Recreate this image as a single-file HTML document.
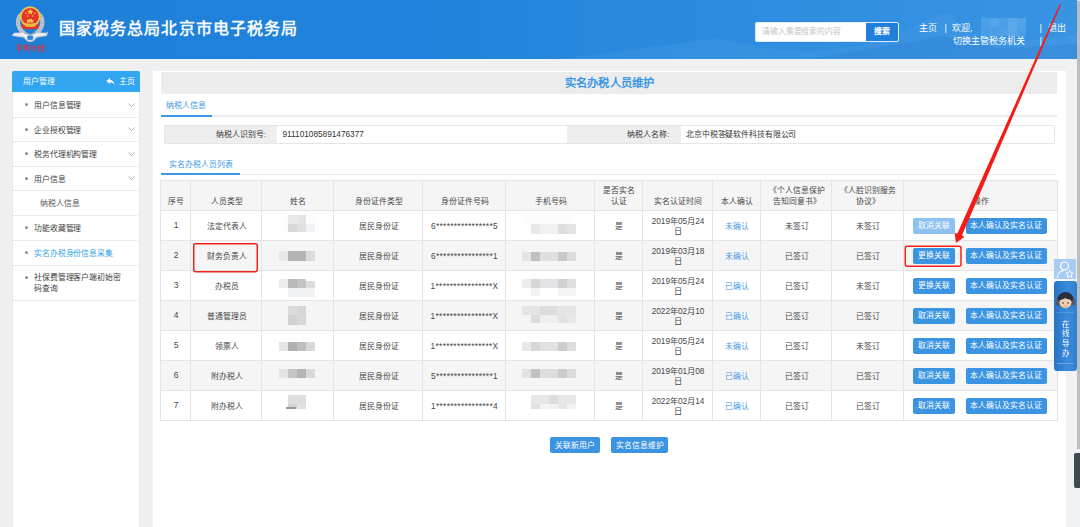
<!DOCTYPE html>
<html lang="zh-CN">
<head>
<meta charset="utf-8">
<title>实名办税人员维护</title>
<style>
*{box-sizing:border-box;margin:0;padding:0}
html,body{width:1080px;height:527px;overflow:hidden}
body{font-family:"Liberation Sans",sans-serif;background:#eff0f2;color:#333;position:relative;font-size:8px}
.abs{position:absolute}
#hdr{left:0;top:0;width:1080px;height:59px;background:linear-gradient(90deg,#1e7fd9 0%,#2083db 40%,#2e8de0 70%,#3893e3 100%);overflow:hidden}
#hdr h1{position:absolute;left:58.700px;top:16.800px;font-size:16px;line-height:24px;font-weight:bold;color:#f5f9fd;letter-spacing:1.120px;white-space:nowrap}
#search{left:755px;top:22px;width:143.500px;height:20px;background:#fff;border-radius:2px;border:1px solid #dcebfa;overflow:hidden}
#search span{position:absolute;left:6px;top:0;line-height:18px;font-size:7.875px;color:#c4c4c4;white-space:nowrap;letter-spacing:-0.120px}
#search b{position:absolute;right:0;top:0;width:32px;height:18px;background:#1f7fdb;color:#fff;font-size:7.875px;line-height:18px;text-align:center;font-weight:bold}
.ht{color:#fff;font-size:9px;line-height:12px;white-space:nowrap}
#side{left:12px;top:71px;width:128px;height:456px;background:#fff;border-left:1px solid #e6e8ec;border-right:1px solid #e6e8ec}
#side .sh{position:absolute;left:-1px;top:0;width:128px;height:21px;background:#32a6f1;border-radius:2px 2px 0 0;color:#fff;font-size:7.875px;line-height:21px}
.mi{position:absolute;left:0;width:126px;font-size:7.875px;line-height:12px;color:#404040;height:25px;background:repeating-linear-gradient(90deg,#dadada 0,#dadada 1px,transparent 1px,transparent 2px) 0 0/100% 1px no-repeat}
.mi i{position:absolute;left:12px;top:11px;width:3px;height:3px;border-radius:50%;background:#8c8c8c}
.mi span{position:absolute;left:21px;top:8px;white-space:nowrap;letter-spacing:-0.120px}
.mi svg{position:absolute;left:115px;top:10.500px}
#main{left:153px;top:71px;width:913px;height:456px;background:#fff}
#ttl{left:161px;top:71.500px;width:896px;height:22px;background:#ececec;color:#3d97e6;font-weight:bold;font-size:11.250px;line-height:22px;text-align:center;letter-spacing:0.250px;padding-left:1px}
.tab{color:#3d97e6;font-size:7.875px;line-height:10px;white-space:nowrap}
.ln{background:#ededed}
.ul{background:#3d97e6;height:2px}
.lab{background:#eeeeee;text-align:right;font-size:7.875px;line-height:17px;height:17px;color:#333;white-space:nowrap}
table{border-collapse:collapse;table-layout:fixed}
#grid{left:160px;top:180px;width:897px}
#grid td,#grid th{border:1px solid #e4e4e4;text-align:center;font-weight:normal;font-size:7.875px;line-height:10.500px;color:#464646;height:30px;padding:4px 0 0 1px;overflow:hidden;vertical-align:middle;white-space:nowrap}
#grid th{background:#f5f5f5;vertical-align:bottom;padding:0 0 2.750px 1px;line-height:11.250px}
#grid tr.alt td{background:#f5f5f5}
#grid td.lk{color:#4a9be6}
#grid td.n{font-size:8.500px;padding-top:0;padding-bottom:1px}
#grid td.id{font-size:8.250px;letter-spacing:0.350px;padding-top:3px}
#grid td.dt{font-size:8.250px;padding-top:3px}
#grid td.op{text-align:left;padding:0.500px 0 0 9px}
.btn{display:inline-block;background:#3a94e2;color:#fff;font-size:7.875px;line-height:16.500px;height:15.500px;border-radius:2px;text-align:center;white-space:nowrap;vertical-align:middle}
.btn.dis{background:#8cc1f0}
.b1{width:41.500px;margin-right:11.500px}
.b2{width:80.500px}
.mz{position:absolute}
</style>
</head>
<body>
<!-- header -->
<div id="hdr" class="abs">
  <svg class="abs" style="left:560px;top:0" width="520" height="59" viewBox="0 0 520 59">
    <path d="M0 59 L40 54 L90 47 L130 42 L158 38 L175 42 L205 48 L250 52 L300 46 L340 34 L365 20 L375 14 L392 14 L398 24 L420 36 L460 42 L520 34 L520 59 Z" fill="#ffffff" opacity="0.045"/>
    <path d="M250 59 L300 50 L350 42 L380 36 L400 40 L440 48 L520 44 L520 59 Z" fill="#0b4fa8" opacity="0.110"/>
  </svg>
  <!-- emblem -->
  <svg class="abs" style="left:0;top:0" width="60" height="59" viewBox="0 0 60 59">
    <g filter="url(#bl)">
    <!-- wreath -->
    <path d="M22.500 13.500 C16.500 17.500 15.800 27 24.500 33.500" fill="none" stroke="#c5cad1" stroke-width="4.200"/>
    <path d="M37.900 13.500 C43.900 17.500 44.600 27 35.900 33.500" fill="none" stroke="#c5cad1" stroke-width="4.200"/>
    <path d="M22.500 13.500 C16.500 17.500 15.800 27 24.500 33.500" fill="none" stroke="#7f8791" stroke-width="3.400" stroke-dasharray="0.700 1.500" opacity=".55"/>
    <path d="M37.900 13.500 C43.900 17.500 44.600 27 35.900 33.500" fill="none" stroke="#7f8791" stroke-width="3.400" stroke-dasharray="0.700 1.500" opacity=".55"/>
    <!-- shield -->
    <path d="M21.800 17 L38.600 17 L38.600 28 Q34 30 30.200 29 Q26.400 30 21.800 28 Z" fill="#e2342c"/>
    <circle cx="30.200" cy="16.600" r="10.400" fill="#e9c348"/>
    <circle cx="30.200" cy="16.600" r="8.600" fill="#e5352c"/>
    <path d="M30.200 8.800l.9 2 2.200.2-1.700 1.400.6 2.100-2-1.200-2 1.200.6-2.100-1.700-1.400 2.200-.2z" fill="#f6d54e"/>
    <circle cx="25.800" cy="13.300" r=".8" fill="#f6d54e"/><circle cx="34.600" cy="13.300" r=".8" fill="#f6d54e"/>
    <circle cx="27.600" cy="16" r=".7" fill="#f6d54e"/><circle cx="32.800" cy="16" r=".7" fill="#f6d54e"/>
    <path d="M27 22.400 L27 20 L28.500 20 L28.500 19 L31.900 19 L31.900 20 L33.400 20 L33.400 22.400 Z" fill="#f1c547"/>
    <path d="M22.500 22.600 Q30.200 24.800 37.900 22.600 L37.600 24 Q30.200 26.200 22.800 24 Z" fill="#ecc349"/>
    <rect x="25" y="25.800" width="10.400" height="1" fill="#e9b83d" opacity=".8"/>
    <!-- ribbon -->
    <path d="M11.700 35.500 L14 32.800 L24 32.200 L30.200 35 L36.400 32.200 L46.400 32.800 L48.200 31.200 L46.800 36 L37 37.600 L33.500 41 Q30.200 43.200 26.900 41 L23.400 37.600 L13.600 36.200 Z" fill="#cfd4da"/>
    <path d="M14 33.800 L24 33.200 L30.200 36 L36.400 33.200 L46 33.800 L45.500 35 L36.800 36.300 L30.200 39.800 L23.600 36.300 L14.500 35.200Z" fill="#eef0f3"/>
    <path d="M27 36.400 L30.200 34.600 L33.400 36.400 L32.600 39.400 Q30.200 40.400 27.800 39.400 Z" fill="#2b86dc"/>
    <path d="M23 31 L30.200 34.200 L37.400 31 L36 33.400 L30.200 36 L24.400 33.400Z" fill="#aeb4bc"/>
    <!-- calligraphy -->
    <g fill="none" stroke="#e3303a" stroke-width="0.850" stroke-linecap="round">
      <path d="M17.600 46 L22 45.600 L21.600 48.600 L17.800 48.800 Z M19.700 43.400 L19.400 52.600"/>
      <path d="M24.400 45.200 L24.200 51 M24.400 45.200 L28.600 45 L28.400 51.200 M25.400 47 L27.600 46.800 M25.400 48.800 L27.600 48.600 M26.500 46 L26.400 50"/>
      <path d="M31.200 45 L32.200 46.400 M31 48 L32.400 47.600 L32 51 M34 45 L34.600 46.200 M36 44.800 L35.400 46.200 M33.800 47.400 L36.400 47.200 M35 47.400 L34.800 51.200 L36.800 50.400"/>
      <path d="M38 47.200 L40 45.400 M38.600 48.200 L40.400 47 M39.200 47.400 L39 51.400 M41.400 45.600 L44 45.400 M41 47.400 L44.400 47.200 M42.600 44.600 L42.600 48.400 M41.400 49.200 L44 49 L43.800 51.400 L41.400 51.400 Z"/>
    </g>
    </g>
    <defs><filter id="bl" x="-5%" y="-5%" width="110%" height="110%"><feGaussianBlur stdDeviation="0.350"/></filter></defs>
  </svg>
  <h1>国家税务总局北京市电子税务局</h1>
  <div id="search" class="abs"><span>请输入需要搜索的内容</span><b>搜索</b></div>
  <div class="abs ht" style="left:919px;top:21.500px">主页</div>
  <div class="abs ht" style="left:944.500px;top:21.500px">|</div>
  <div class="abs ht" style="left:952px;top:21.500px">欢迎,</div>
  <div class="abs" style="left:981px;top:18px;width:45px;height:17.500px;background:#4b9fe7;filter:blur(0.400px)">
    <div class="abs" style="left:9px;top:0;width:9px;height:9px;background:#55a5e9"></div>
    <div class="abs" style="left:27px;top:0;width:9px;height:17.500px;background:#5aa8ea"></div>
    <div class="abs" style="left:36px;top:0;width:9px;height:9px;background:#52a3e8"></div>
    <div class="abs" style="left:0;top:9px;width:9px;height:8.500px;background:#489de6"></div>
    <div class="abs" style="left:18px;top:9px;width:9px;height:8.500px;background:#4fa1e8"></div>
  </div>
  <div class="abs ht" style="left:1039.500px;top:21.500px">|</div>
  <div class="abs ht" style="left:1047.500px;top:21.500px">退出</div>
  <div class="abs ht" style="left:952.500px;top:35px">切换主管税务机关</div>
  <div class="abs ht" style="left:1039.500px;top:35px">|</div>
</div>

<!-- sidebar -->
<div id="side" class="abs">
  <div class="sh"><span style="position:absolute;left:11px">用户管理</span>
    <svg style="position:absolute;left:94px;top:7px" width="9" height="7.500" viewBox="0 0 9 8"><path d="M4 0 L0 3.200 L4 6.400 L4 4.400 C6.200 4.400 7.600 5.200 8.600 7.200 C8.400 4 6.800 2.200 4 2 Z" fill="#fff"/></svg>
    <span style="position:absolute;left:106.500px">主页</span></div>
  <div class="mi" style="top:21px;background:none"><i style="top:11px"></i><span style="top:8px">用户信息管理</span><svg width="7" height="4.500" viewBox="0 0 8 5"><path d="M.5 .5 L4 4 L7.500 .5" fill="none" stroke="#999" stroke-width="0.900"/></svg></div>
  <div class="mi" style="top:45.600px"><i></i><span>企业授权管理</span><svg width="7" height="4.500" viewBox="0 0 8 5"><path d="M.5 .5 L4 4 L7.500 .5" fill="none" stroke="#999" stroke-width="0.900"/></svg></div>
  <div class="mi" style="top:70.200px"><i></i><span>税务代理机构管理</span><svg width="7" height="4.500" viewBox="0 0 8 5"><path d="M.5 .5 L4 4 L7.500 .5" fill="none" stroke="#999" stroke-width="0.900"/></svg></div>
  <div class="mi" style="top:94.800px"><i></i><span>用户信息</span><svg width="7" height="4.500" viewBox="0 0 8 5"><path d="M.5 .5 L4 4 L7.500 .5" fill="none" stroke="#999" stroke-width="0.900"/></svg></div>
  <div class="mi" style="top:119.400px"><span style="left:27px;color:#555;top:8px">纳税人信息</span></div>
  <div class="mi" style="top:144px"><i style="top:11px"></i><span style="top:8px">功能收藏管理</span></div>
  <div class="mi" style="top:169px"><i style="top:11px"></i><span style="color:#31a4e6;top:8px">实名办税身份信息采集</span></div>
  <div class="mi" style="top:194px;height:36px"><i style="top:11px"></i><span style="white-space:normal;width:90px;line-height:10.700px;top:8px">社保费管理客户端初始密码查询</span></div>
  <div class="mi" style="top:229px;height:2px"></div>
</div>

<!-- main -->
<div id="main" class="abs"></div>
<div class="abs" style="left:1066px;top:59px;width:14px;height:468px;background:#f0f1f3"></div>
<div class="abs" style="left:1076.500px;top:0;width:3.500px;height:59px;background:#dfe5ec;z-index:5"></div>
<div class="abs" style="left:1077px;top:1px;width:3px;height:448px;background:#bdbdbd;z-index:6"></div>
<div class="abs" style="left:1074px;top:453px;width:6px;height:35px;background:#3e4954;border-radius:2px 0 0 2px"></div>
<div id="ttl" class="abs">实名办税人员维护</div>

<div class="abs tab" style="left:166px;top:101px;font-size:8px">纳税人信息</div>
<div class="abs ln" style="left:161px;top:115px;width:896px;height:1.500px"></div>
<div class="abs ul" style="left:161px;top:114.500px;width:50.500px"></div>

<!-- info row -->
<div class="abs" style="left:164px;top:125px;width:891px;height:19px;border:1px solid #e6e6e6;background:#fff"></div>
<div class="abs lab" style="left:165px;top:126px;width:112px;padding-right:11px">纳税人识别号:</div>
<div class="abs" style="left:282.500px;top:126px;font-size:8.250px;line-height:17px;color:#333">911101085891476377</div>
<div class="abs lab" style="left:567px;top:126px;width:113.500px;padding-right:11px">纳税人名称:</div>
<div class="abs" style="left:686px;top:126px;font-size:7.875px;line-height:17px;color:#333;white-space:nowrap;letter-spacing:-0.120px">北京中税答疑软件科技有限公司</div>

<div class="abs tab" style="left:168.500px;top:159.500px">实名办税人员列表</div>
<div class="abs ln" style="left:161px;top:173.500px;width:896px;height:1.500px"></div>
<div class="abs ul" style="left:161px;top:173px;width:78.500px"></div>

<table id="grid" class="abs">
<colgroup><col style="width:30px"><col style="width:71px"><col style="width:72px"><col style="width:89px"><col style="width:83px"><col style="width:89px"><col style="width:48px"><col style="width:70px"><col style="width:48px"><col style="width:71px"><col style="width:72px"><col style="width:154px"></colgroup>
<tr><th>序号</th><th>人员类型</th><th>姓名</th><th>身份证件类型</th><th>身份证件号码</th><th>手机号码</th><th>是否实名<br>认证</th><th>实名认证时间</th><th>本人确认</th><th>《个人信息保护<br>告知同意书》</th><th>《人脸识别服务<br>协议》</th><th>操作</th></tr>
<tr><td class="n">1</td><td>法定代表人</td><td></td><td>居民身份证</td><td class="id">6****************5</td><td></td><td>是</td><td class="dt">2019年05月24<br>日</td><td class="lk">未确认</td><td>未签订</td><td>未签订</td><td class="op"><span class="btn b1 dis">取消关联</span><span class="btn b2">本人确认及实名认证</span></td></tr>
<tr class="alt"><td class="n">2</td><td>财务负责人</td><td></td><td>居民身份证</td><td class="id">6****************1</td><td></td><td>是</td><td class="dt">2019年03月18<br>日</td><td class="lk">未确认</td><td>已签订</td><td>已签订</td><td class="op"><span class="btn b1">更换关联</span><span class="btn b2">本人确认及实名认证</span></td></tr>
<tr><td class="n">3</td><td>办税员</td><td></td><td>居民身份证</td><td class="id">1****************X</td><td></td><td>是</td><td class="dt">2019年05月24<br>日</td><td class="lk">已确认</td><td>已签订</td><td>未签订</td><td class="op"><span class="btn b1">更换关联</span><span class="btn b2">本人确认及实名认证</span></td></tr>
<tr class="alt"><td class="n">4</td><td>普通管理员</td><td></td><td>居民身份证</td><td class="id">1****************X</td><td></td><td>是</td><td class="dt">2022年02月10<br>日</td><td class="lk">已确认</td><td>已签订</td><td>已签订</td><td class="op"><span class="btn b1">取消关联</span><span class="btn b2">本人确认及实名认证</span></td></tr>
<tr><td class="n">5</td><td>领票人</td><td></td><td>居民身份证</td><td class="id">1****************X</td><td></td><td>是</td><td class="dt">2019年05月24<br>日</td><td class="lk">未确认</td><td>已签订</td><td>未签订</td><td class="op"><span class="btn b1">取消关联</span><span class="btn b2">本人确认及实名认证</span></td></tr>
<tr class="alt"><td class="n">6</td><td>附办税人</td><td></td><td>居民身份证</td><td class="id">5****************1</td><td></td><td>是</td><td class="dt">2019年01月08<br>日</td><td class="lk">已确认</td><td>已签订</td><td>已签订</td><td class="op"><span class="btn b1">取消关联</span><span class="btn b2">本人确认及实名认证</span></td></tr>
<tr><td class="n">7</td><td>附办税人</td><td></td><td>居民身份证</td><td class="id">1****************4</td><td></td><td>是</td><td class="dt">2022年02月14<br>日</td><td class="lk">已确认</td><td>已签订</td><td>已签订</td><td class="op"><span class="btn b1">取消关联</span><span class="btn b2">本人确认及实名认证</span></td></tr>
</table>

<div class="abs" style="left:0;top:0;filter:blur(0.5px)">
<div class="mz" style="left:284px;top:213px;width:34px;height:21px;background:#fdfdfd"></div>
<div class="mz" style="left:288px;top:215px;width:9px;height:8.5px;background:#e9e9e9"></div>
<div class="mz" style="left:297px;top:215px;width:9px;height:8.5px;background:#e4e4e4"></div>
<div class="mz" style="left:288px;top:223.5px;width:9px;height:8.5px;background:#d7d7d7"></div>
<div class="mz" style="left:297px;top:223.5px;width:9px;height:8.5px;background:#e0e0e0"></div>
<div class="mz" style="left:306px;top:223.5px;width:9px;height:8.5px;background:#f0f2f5"></div>
<div class="mz" style="left:279px;top:251px;width:9px;height:10px;background:#e7e7e7"></div>
<div class="mz" style="left:288px;top:251px;width:18px;height:10px;background:#b4b4b4"></div>
<div class="mz" style="left:306px;top:251px;width:9px;height:10px;background:#dcdcdc"></div>
<div class="mz" style="left:279px;top:279px;width:9px;height:9px;background:#ececec"></div>
<div class="mz" style="left:288px;top:279px;width:9px;height:9px;background:#b9b9b9"></div>
<div class="mz" style="left:297px;top:279px;width:9px;height:9px;background:#c4c4c4"></div>
<div class="mz" style="left:306px;top:281px;width:9px;height:7px;background:#dcdcdc"></div>
<div class="mz" style="left:288px;top:288px;width:27px;height:9px;background:#f1f2f3"></div>
<div class="mz" style="left:288px;top:305.5px;width:9px;height:9.5px;background:#dbdbdb"></div>
<div class="mz" style="left:297px;top:305.5px;width:9px;height:9.5px;background:#d6d6d6"></div>
<div class="mz" style="left:288px;top:315px;width:9px;height:9.5px;background:#d2d2d2"></div>
<div class="mz" style="left:297px;top:315px;width:9px;height:9.5px;background:#d8d8d8"></div>
<div class="mz" style="left:279px;top:342px;width:9px;height:8.5px;background:#e6e6e6"></div>
<div class="mz" style="left:288px;top:342px;width:9px;height:8.5px;background:#b0b0b0"></div>
<div class="mz" style="left:297px;top:342px;width:9px;height:8.5px;background:#bebebe"></div>
<div class="mz" style="left:306px;top:342px;width:9px;height:8.5px;background:#d9d9d9"></div>
<div class="mz" style="left:279px;top:368.5px;width:9px;height:9px;background:#e4e4e4"></div>
<div class="mz" style="left:288px;top:368.5px;width:9px;height:9px;background:#c6c6c6"></div>
<div class="mz" style="left:297px;top:368.5px;width:9px;height:9px;background:#b4b4b4"></div>
<div class="mz" style="left:306px;top:368.5px;width:9px;height:9px;background:#d8d8d8"></div>
<div class="mz" style="left:288px;top:395px;width:18px;height:9px;background:#dddddd"></div>
<div class="mz" style="left:288px;top:404px;width:9px;height:5px;background:#d2d2d2"></div>
<div class="mz" style="left:297px;top:404px;width:9px;height:5px;background:#e3e3e3"></div>
<div class="mz" style="left:286px;top:407px;width:10px;height:1.5px;background:#9a9a9a"></div>
<div class="mz" style="left:523px;top:214px;width:50px;height:12px;background:#fcfcfc"></div>
<div class="mz" style="left:531px;top:224px;width:9px;height:9.5px;background:#e8e8e8"></div>
<div class="mz" style="left:540px;top:224px;width:18px;height:9.5px;background:#f1f1f1"></div>
<div class="mz" style="left:558px;top:224px;width:9px;height:9.5px;background:#dedede"></div>
<div class="mz" style="left:567px;top:224px;width:9px;height:9.5px;background:#e3e3e3"></div>
<div class="mz" style="left:522px;top:252px;width:9px;height:9px;background:#e4e4e4"></div>
<div class="mz" style="left:531px;top:252px;width:9px;height:9px;background:#c2c0be"></div>
<div class="mz" style="left:540px;top:252px;width:18px;height:9px;background:#dfdfdf"></div>
<div class="mz" style="left:558px;top:252px;width:9px;height:9px;background:#c8c8c8"></div>
<div class="mz" style="left:567px;top:252px;width:9px;height:9px;background:#dcdcdc"></div>
<div class="mz" style="left:522px;top:279px;width:9px;height:9px;background:#ededed"></div>
<div class="mz" style="left:531px;top:279px;width:9px;height:9px;background:#d8d6d4"></div>
<div class="mz" style="left:540px;top:279px;width:18px;height:9px;background:#e3e3e7"></div>
<div class="mz" style="left:558px;top:279px;width:9px;height:9px;background:#d0d0d0"></div>
<div class="mz" style="left:567px;top:279px;width:9px;height:9px;background:#dedede"></div>
<div class="mz" style="left:531px;top:288px;width:9px;height:8px;background:#f3f3f3"></div>
<div class="mz" style="left:558px;top:288px;width:18px;height:8px;background:#f5f5f5"></div>
<div class="mz" style="left:522px;top:306px;width:54px;height:9px;background:#e5e5e5"></div>
<div class="mz" style="left:540px;top:306px;width:18px;height:9px;background:#dddddd"></div>
<div class="mz" style="left:531px;top:315px;width:9px;height:8px;background:#dcdcdc"></div>
<div class="mz" style="left:540px;top:315px;width:18px;height:8px;background:#f0f0f0"></div>
<div class="mz" style="left:558px;top:315px;width:9px;height:8px;background:#e2e2e2"></div>
<div class="mz" style="left:567px;top:315px;width:9px;height:8px;background:#e8e8e8"></div>
<div class="mz" style="left:522px;top:342px;width:9px;height:9px;background:#e8e8e8"></div>
<div class="mz" style="left:531px;top:342px;width:9px;height:9px;background:#d6d6d6"></div>
<div class="mz" style="left:540px;top:342px;width:18px;height:9px;background:#e1e1e1"></div>
<div class="mz" style="left:558px;top:342px;width:9px;height:9px;background:#cccccc"></div>
<div class="mz" style="left:567px;top:342px;width:9px;height:9px;background:#dedede"></div>
<div class="mz" style="left:522px;top:368.5px;width:9px;height:9px;background:#e2e2e2"></div>
<div class="mz" style="left:531px;top:368.5px;width:9px;height:9px;background:#c4c2c0"></div>
<div class="mz" style="left:540px;top:368.5px;width:18px;height:9px;background:#dddde0"></div>
<div class="mz" style="left:558px;top:368.5px;width:9px;height:9px;background:#cccccc"></div>
<div class="mz" style="left:567px;top:368.5px;width:9px;height:9px;background:#dcdcdc"></div>
<div class="mz" style="left:531px;top:395px;width:45px;height:9px;background:#e7e7e7"></div>
<div class="mz" style="left:549px;top:395px;width:9px;height:9px;background:#dddddd"></div>
<div class="mz" style="left:531px;top:404px;width:9px;height:5px;background:#e1e1e1"></div>
<div class="mz" style="left:540px;top:404px;width:18px;height:5px;background:#f3f3f3"></div>
<div class="mz" style="left:558px;top:404px;width:9px;height:5px;background:#e7e7e7"></div>
<div class="mz" style="left:567px;top:404px;width:9px;height:5px;background:#f3f3f3"></div>
</div>
<!-- bottom buttons -->
<div class="abs btn" style="left:550px;top:437px;width:49.500px;height:16px;line-height:17px">关联新用户</div>
<div class="abs btn" style="left:611px;top:437px;width:57px;height:16px;line-height:17px">实名信息维护</div>

<!-- red annotations -->
<svg class="abs" style="left:0;top:0" width="1080" height="527" viewBox="0 0 1080 527">
  <rect x="193.750" y="243.750" width="63.500" height="28" rx="2" fill="none" stroke="#f3201a" stroke-width="1.500"/>
  <rect x="905.250" y="246.250" width="55.750" height="20" rx="2" fill="none" stroke="#f3201a" stroke-width="1.500"/>
  <path d="M1059.700 4.200 L1061 4.700 L962 235.300 L964.200 236.900 L956 242.900 L954.600 232.900 L957.400 233.500 Z" fill="#f71b15"/>
</svg>

<!-- right floating widget -->
<div class="abs" style="left:1054px;top:259px;width:22px;height:20px;background:#a9cdf2"></div>
<svg class="abs" style="left:1054px;top:259px" width="22" height="20" viewBox="0 0 22 20">
  <circle cx="10.500" cy="7" r="4" fill="none" stroke="#fff" stroke-width="1.200"/>
  <path d="M3.500 19 C3.500 13.500 7 11.500 10.500 11.500" fill="none" stroke="#fff" stroke-width="1.200"/>
  <path d="M15.500 11.500 l1.100 2.300 2.500.3 -1.800 1.700 .5 2.500 -2.300-1.200 -2.300 1.200 .5-2.500 -1.800-1.700 2.500-.3z" fill="none" stroke="#fff" stroke-width="0.900"/>
</svg>
<div class="abs" style="left:1054px;top:281px;width:22.500px;height:90px;border-radius:3px;background:linear-gradient(90deg,#2a74c4,#3a8cdb 60%,#2f7fd0)"></div>
<svg class="abs" style="left:1054px;top:289px" width="23" height="23" viewBox="0 0 23 23">
  <path d="M3 12 C3 3 20 3 20 12" fill="none" stroke="#5a6573" stroke-width="1.600"/>
  <circle cx="11.500" cy="11" r="8" fill="#27303c"/>
  <ellipse cx="11.500" cy="13.500" rx="6.200" ry="5.800" fill="#f1cdb0"/>
  <path d="M4.800 12.500 C5 5.500 18 5.500 18.200 12.500 C16 9.500 13 10.500 11 9 C9 10.500 6.500 10.500 4.800 12.500Z" fill="#27303c"/>
  <rect x="1.800" y="10.500" width="3.200" height="6" rx="1.400" fill="#4c5868"/><rect x="18" y="10.500" width="3.200" height="6" rx="1.400" fill="#4c5868"/>
  <circle cx="9" cy="14" r=".8" fill="#3a2a22"/><circle cx="14" cy="14" r=".8" fill="#3a2a22"/>
  <path d="M9.800 17 Q11.500 18 13.200 17" fill="none" stroke="#c77" stroke-width=".6"/>
</svg>
<div class="abs" style="left:1054px;top:319.500px;width:22.500px;color:#fff;font-size:7.500px;line-height:9.800px;text-align:center">在<br>线<br>导<br>办</div>
<div class="abs" style="left:1057px;top:362.500px;width:17px;height:1px;background:#7fb5ea;opacity:.7"></div>
<div class="abs" style="left:1057px;top:311.500px;width:17px;height:1px;background:#7fb5ea;opacity:.4"></div>

</body>
</html>
